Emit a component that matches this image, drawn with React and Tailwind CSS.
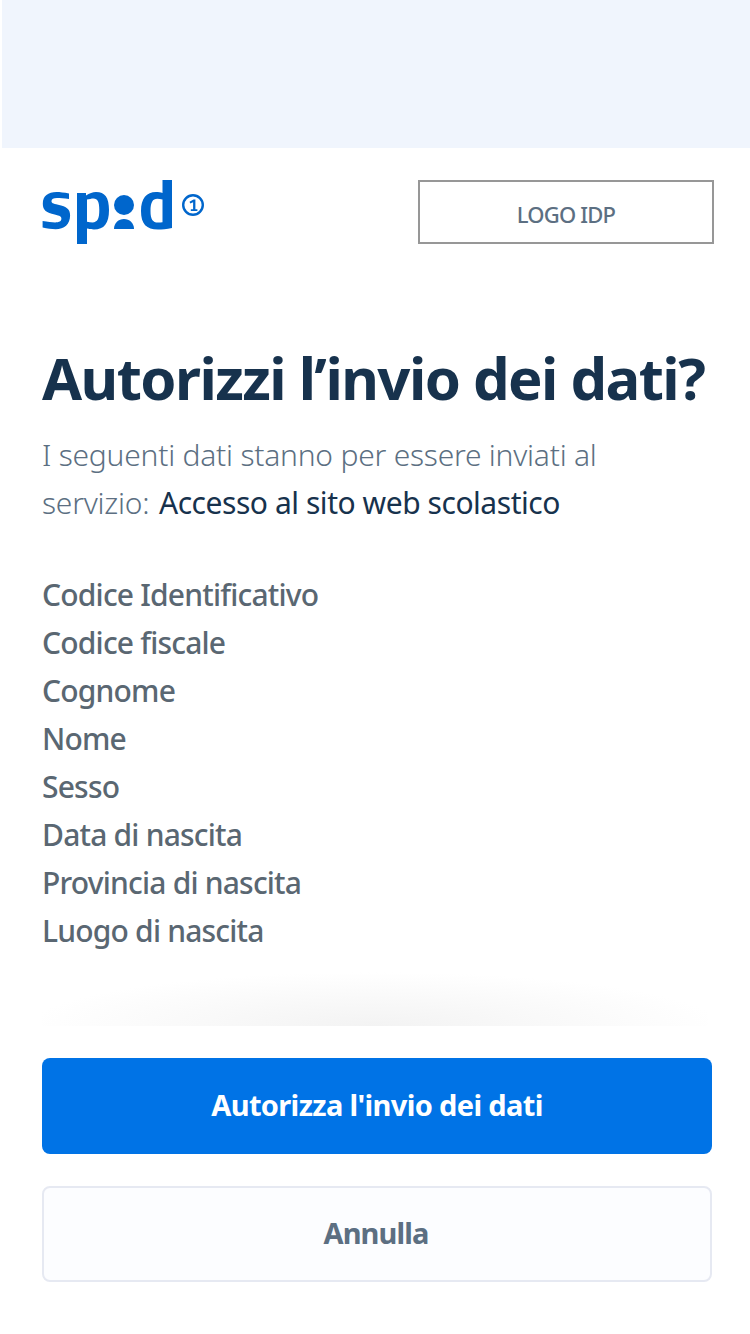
const items = ["Codice Identificativo","Codice fiscale","Cognome","Nome","Sesso","Data di nascita","Provincia di nascita","Luogo di nascita"];

function SpidLogo() {
  return (
    <svg width="164" height="66" viewBox="0 0 164 66" className="block" fill="none">
      <g transform="translate(-42,-180)" fill="#0066cc">
        <path d="M69 192.500v6.500c-5-.8-9-1.100-12-1.100-3.600 0-5.500 1-5.500 3 0 1.800 1.200 2.600 6.600 3.800 8.600 1.900 12 4.300 12 10.600 0 9-5.800 14-14.500 14-3.800 0-8.300-.6-13-1.700v-6.500c5.200.9 9.300 1.300 12.500 1.300 4.300 0 6.300-1.200 6.300-3.600 0-2-1.300-3-6.800-4.200-8.100-1.800-11.800-4.300-11.800-10.800 0-7.900 5.300-11.800 13.700-11.800 3.500 0 7.500.5 12.500 1.500z" />
        <path fillRule="evenodd" d="M77 193h9v2.500c3.500-2.300 6.700-3.500 10-3.500 9 0 13 5.500 13 18 0 13.500-5 19.500-15 19.500-2.200 0-5-.4-7-.9V244H77zM87 199.500v22.300c2 .4 3.700.6 5.500.6 5 0 6.800-3.500 6.800-12.300 0-8.200-1.700-11.600-5.800-11.600-2.100 0-4.300.7-6.500 1z" />
        <circle cx="124" cy="205" r="10" />
        <path d="M114 229c0-6 4.500-10 10-10s10 4 10 10z" />
        <path fillRule="evenodd" d="M172 180v48c-5.500 1-10 1.500-14 1.500-11.500 0-17-5.500-17-18.500 0-12.500 5.500-19 15-19 2.300 0 4.800.4 6.500 1V180zM162.500 199.500c-1.700-.5-3.500-.8-5.200-.8-4.700 0-6.800 3.700-6.800 12.300 0 8.300 2.200 11.600 7.500 11.600 1.500 0 3-.1 4.500-.4z" />
        <circle cx="193" cy="205" r="9.800" fill="none" stroke="#0066cc" strokeWidth="2.400" />
        <path d="M189.500 201.800l4-2.200h1.900v9.600h2v1.900h-6.600v-1.900h2.300v-7l-2.800 1.400z" />
      </g>
    </svg>
  );
}

export default function App() {
  return (
    <div className="w-[750px] h-[1334px] bg-white overflow-hidden" style={{ fontFamily: '"Noto Sans", sans-serif' }}>
      <div className="ml-[2px] h-[148px] bg-[#f0f5fd]" />
      <header className="flex items-start justify-between pl-[42px] pr-[36px] pt-[32px]">
        <SpidLogo />
        <div className="w-[296px] h-[64px] pt-[5px] border-2 border-[#979797] flex items-center justify-center text-[22px] font-medium text-[#5c6f82] tracking-[-0.8px]">LOGO IDP</div>
      </header>
      <main className="px-[42px]">
        <h1 className="mt-[96px] text-[58px] leading-[72px] font-bold text-[#17324d] whitespace-nowrap tracking-[-1.55px]">Autorizzi l’invio dei dati?</h1>
        <p className="mt-[17px] text-[30px] leading-[48px] font-light text-[#5c6f82] tracking-[-0.23px]">
          I seguenti dati stanno per essere inviati al<br />
          servizio: <span className="ml-[2px] font-normal text-[#17324d] tracking-[-0.45px]">Accesso al sito web scolastico</span>
        </p>
        <ul className="mt-[44px]">
          {items.map((t) => (
            <li key={t} className="text-[30px] leading-[48px] font-medium text-[#5a6772] tracking-[-0.8px]">{t}</li>
          ))}
        </ul>
      </main>
      <div className="mt-[17px] mx-[42px] h-[54px] bg-[radial-gradient(ellipse_52%_100%_at_50%_100%,#f3f3f3,#ffffff)]" />
      <div className="mt-[32px] ml-[42px] w-[670px] flex flex-col gap-[32px]">
        <button className="h-[96px] pb-[2px] rounded-[8px] bg-[#0073e6] text-white text-[29px] font-bold tracking-[-0.65px]">Autorizza l'invio dei dati</button>
        <button className="h-[96px] pb-[2px] pr-[2px] rounded-[8px] border-2 border-[#e6e9f2] bg-[#fcfdff] text-[#5c6f82] text-[29px] font-bold tracking-[-0.9px]">Annulla</button>
      </div>
    </div>
  );
}
